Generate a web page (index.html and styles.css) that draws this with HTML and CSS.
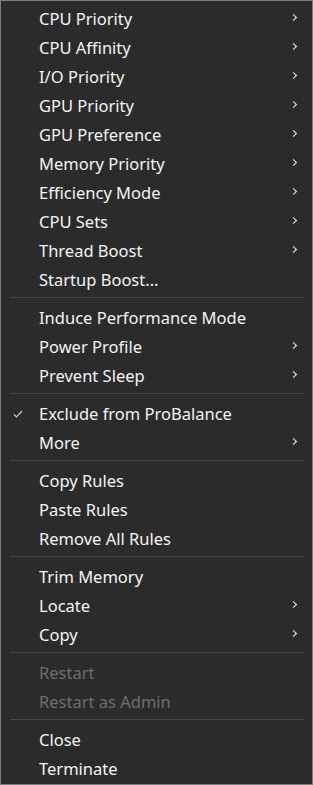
FILE: index.html
```html
<!DOCTYPE html>
<html lang="en">
<head>
    <meta charset="UTF-8">
    <meta name="viewport" content="width=device-width, initial-scale=1.0">
    <title>Process Menu</title>
    <link rel="stylesheet" href="styles.css">
</head>
<body>
    <div class="menu">
        <div class="item">CPU Priority<span class="arrow"></span></div>
        <div class="item">CPU Affinity<span class="arrow"></span></div>
        <div class="item">I/O Priority<span class="arrow"></span></div>
        <div class="item">GPU Priority<span class="arrow"></span></div>
        <div class="item">GPU Preference<span class="arrow"></span></div>
        <div class="item">Memory Priority<span class="arrow"></span></div>
        <div class="item">Efficiency Mode<span class="arrow"></span></div>
        <div class="item">CPU Sets<span class="arrow"></span></div>
        <div class="item">Thread Boost<span class="arrow"></span></div>
        <div class="item">Startup Boost...</div>
        <div class="sep"></div>
        <div class="item">Induce Performance Mode</div>
        <div class="item">Power Profile<span class="arrow"></span></div>
        <div class="item">Prevent Sleep<span class="arrow"></span></div>
        <div class="sep"></div>
        <div class="item">
            <svg class="check" width="10" height="8" viewBox="0 0 10 8">
                <polyline points="1,4.5 3.5,7 9,1" fill="none" stroke="#cfcfcf" stroke-width="1.2"/>
            </svg>
            Exclude from ProBalance
        </div>
        <div class="item">More<span class="arrow"></span></div>
        <div class="sep"></div>
        <div class="item">Copy Rules</div>
        <div class="item">Paste Rules</div>
        <div class="item">Remove All Rules</div>
        <div class="sep"></div>
        <div class="item">Trim Memory</div>
        <div class="item">Locate<span class="arrow"></span></div>
        <div class="item">Copy<span class="arrow"></span></div>
        <div class="sep"></div>
        <div class="item disabled">Restart</div>
        <div class="item disabled">Restart as Admin</div>
        <div class="sep"></div>
        <div class="item">Close</div>
        <div class="item">Terminate</div>
    </div>
</body>
</html>
```

FILE: styles.css
```css
body {
    margin: 0;
    background: #2b2b2b;
    font-family: "Noto Sans", "Segoe UI", sans-serif;
}

.menu {
    width: 313px;
    height: 785px;
    box-sizing: border-box;
    border: 1px solid #7c7c7c;
    background: #2b2b2b;
    padding: 3px 0 2px;
}

.item {
    position: relative;
    height: 29px;
    line-height: 29px;
    padding-left: 38px;
    font-size: 16.5px;
    color: #f4f4f4;
    white-space: nowrap;
}

.item.disabled {
    color: #6e6e6e;
}

.arrow {
    position: absolute;
    right: 16px;
    top: 11px;
    width: 4px;
    height: 4px;
    border-top: 1.5px solid #f0f0f0;
    border-right: 1.5px solid #f0f0f0;
    transform: rotate(45deg);
}

.check {
    position: absolute;
    left: 12px;
    top: 11px;
}

.sep {
    height: 1px;
    margin: 3px 8px 5px 9px;
    background: #474747;
}
```
